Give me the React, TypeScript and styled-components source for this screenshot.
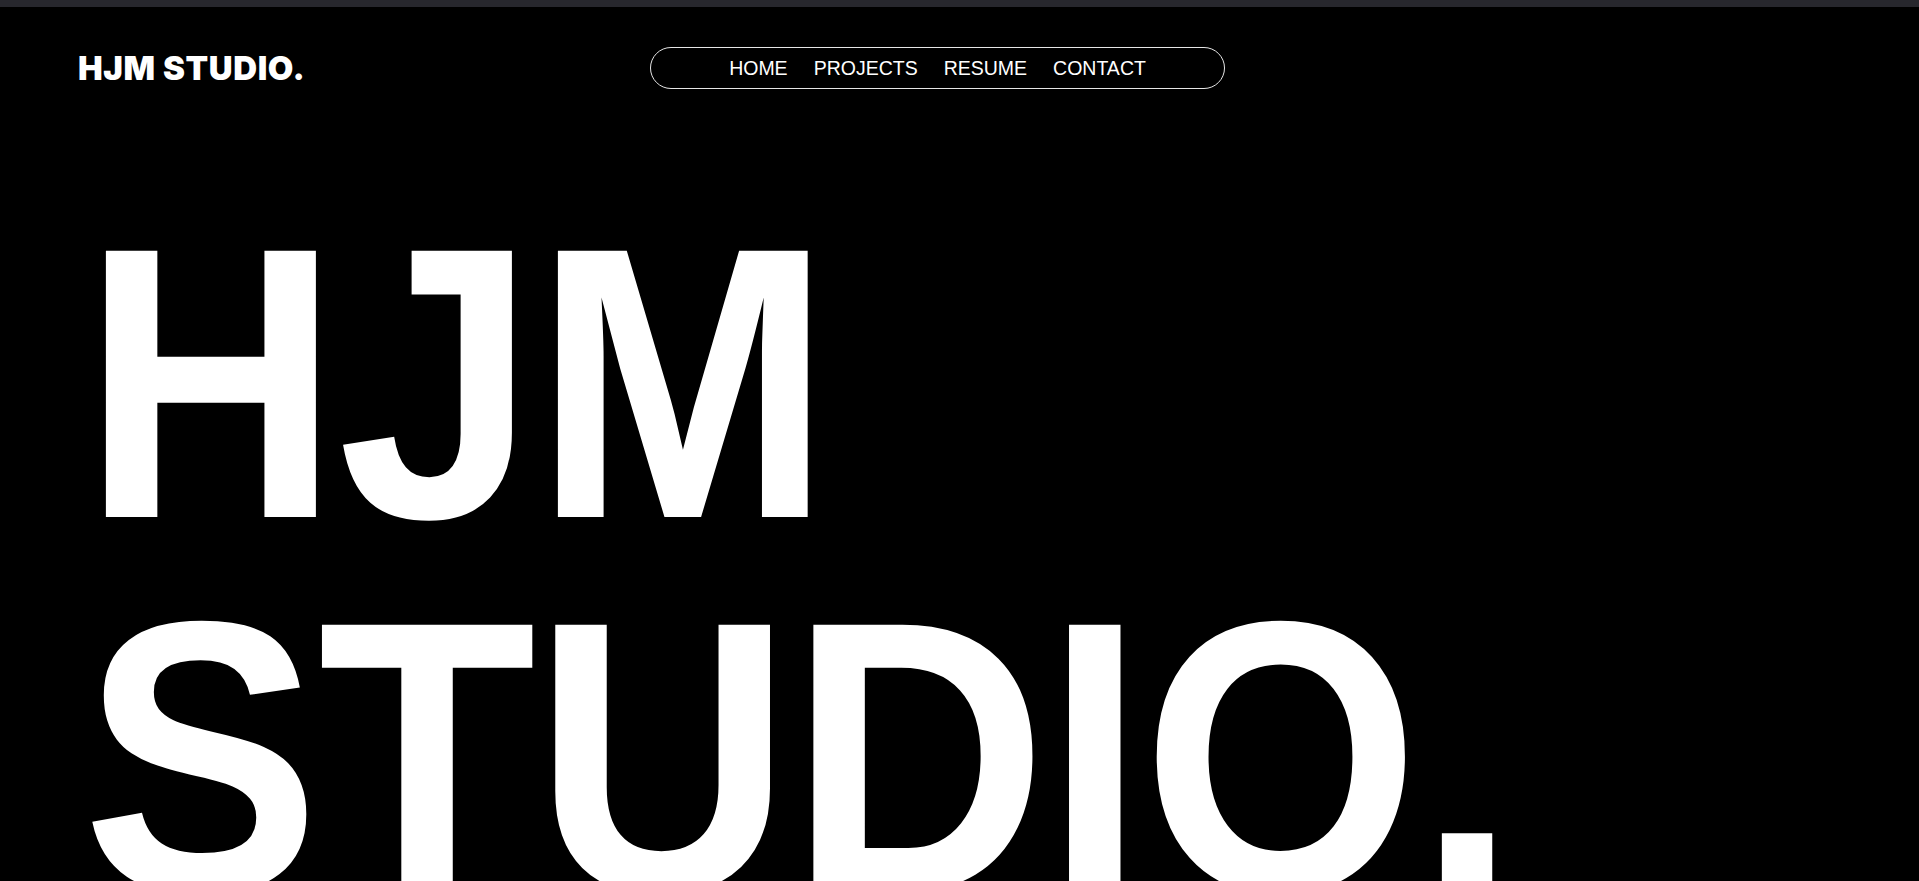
import React from "react";
import styled, { createGlobalStyle } from "styled-components";

const GlobalStyle = createGlobalStyle`
  html, body {
    margin: 0;
    padding: 0;
    background: #000;
    overflow: hidden;
  }
  body {
    font-family: "Liberation Sans", Arial, sans-serif;
    color: #fff;
  }
  * { box-sizing: border-box; }
`;

const Page = styled.div`
  width: 100%;
  height: 881px;
  background: #000;
  overflow: hidden;
`;

const TopStrip = styled.div`
  height: 7px;
  background: #27272d;
`;

const Header = styled.header`
  display: grid;
  grid-template-columns: 573px 575px;
  align-items: center;
  padding: 40px 77px 0 77px;
`;

const Logo = styled.a`
  font-family: Inter, "Liberation Sans", Arial, sans-serif;
  font-weight: 900;
  font-size: 33px;
  line-height: 1;
  letter-spacing: 0.6px;
  color: #fff;
  text-decoration: none;
  white-space: nowrap;
  padding-left: 1px;
`;

const NavPill = styled.nav`
  height: 42px;
  border: 1px solid #e6e6e6;
  border-radius: 21px;
  display: flex;
  align-items: center;
  justify-content: center;
  gap: 26px;
`;

const NavLink = styled.a`
  font-family: "Liberation Sans", Arial, sans-serif;
  font-size: 19.5px;
  font-weight: 400;
  color: #fff;
  text-decoration: none;
  line-height: 1;
  padding-top: 1px;
`;

const Hero = styled.main`
  padding: 107px 0 0 82px;
`;

const HeroTitle = styled.h1`
  margin: 0;
  font-family: "Liberation Sans", Arial, sans-serif;
  font-weight: 700;
  font-size: 387px;
  line-height: 374px;
  letter-spacing: -2.5px;
  color: #fff;
  white-space: nowrap;
  transform: scaleX(0.923);
  transform-origin: left top;
`;

const HeroLine = styled.span`
  display: block;
`;

export default function App() {
  return (
    <Page>
      <GlobalStyle />
      <TopStrip />
      <Header>
        <Logo href="#">HJM STUDIO.</Logo>
        <NavPill>
          <NavLink href="#">HOME</NavLink>
          <NavLink href="#">PROJECTS</NavLink>
          <NavLink href="#">RESUME</NavLink>
          <NavLink href="#">CONTACT</NavLink>
        </NavPill>
      </Header>
      <Hero>
        <HeroTitle>
          <HeroLine>HJM</HeroLine>
          <HeroLine>STUDIO.</HeroLine>
        </HeroTitle>
      </Hero>
    </Page>
  );
}
